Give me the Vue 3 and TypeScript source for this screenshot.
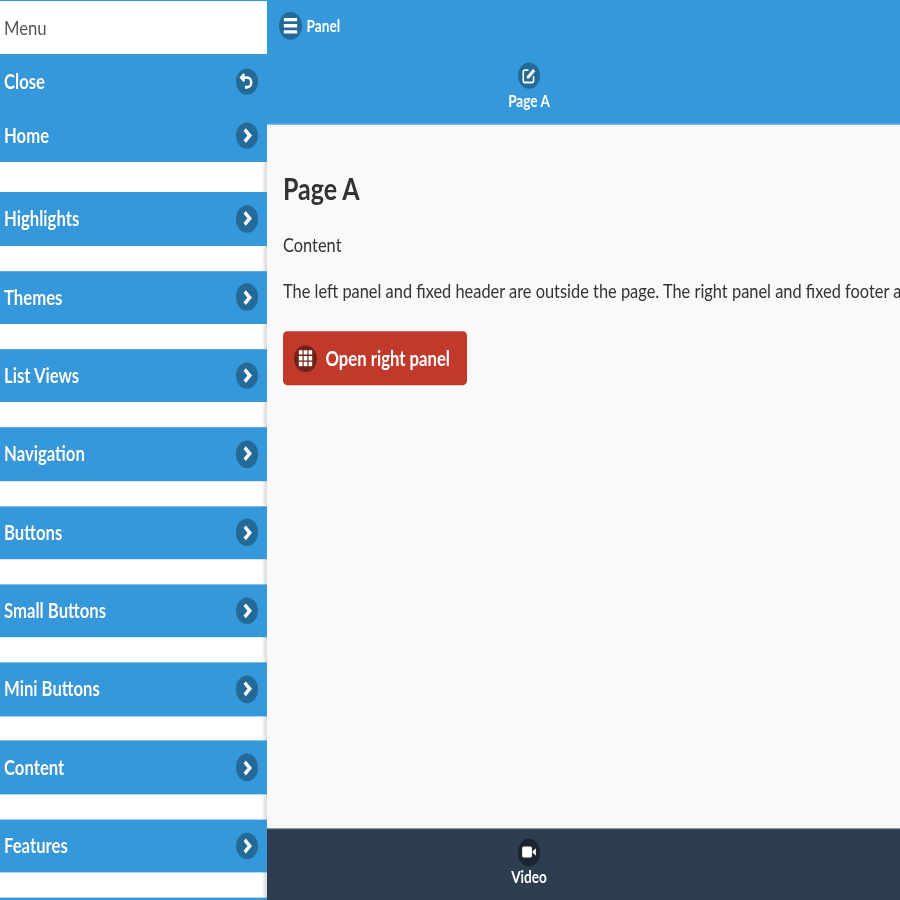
<script setup lang="ts">
const items: string[] = [
  'Highlights',
  'Themes',
  'List Views',
  'Navigation',
  'Buttons',
  'Small Buttons',
  'Mini Buttons',
  'Content',
  'Features',
]
</script>

<template>
  <div class="viewport">
    <div class="app">
      <aside class="side">
        <div class="menu-title">Menu</div>
        <div class="row close">
          <span>Close</span>
          <span class="ico">
            <svg viewBox="0 0 14 14" width="16" height="16"><path d="M4.6 1.4 2 4.1 4.8 6.6M2.6 4.1h4.6a3.5 3.5 0 0 1 0 7H5.2" fill="none" stroke="#fff" stroke-width="2.1" /></svg>
          </span>
        </div>
        <div class="row home">
          <span>Home</span>
          <span class="ico">
            <svg viewBox="0 0 14 14" width="16" height="16"><path d="M5 2.6 9.4 7 5 11.4" fill="none" stroke="#fff" stroke-width="2.8" /></svg>
          </span>
        </div>
        <div v-for="item in items" :key="item" class="row">
          <span>{{ item }}</span>
          <span class="ico">
            <svg viewBox="0 0 14 14" width="16" height="16"><path d="M5 2.6 9.4 7 5 11.4" fill="none" stroke="#fff" stroke-width="2.8" /></svg>
          </span>
        </div>
        <div class="row"></div>
      </aside>
      <main class="main">
        <header class="head">
          <div class="panel">
            <span class="ico">
              <svg viewBox="0 0 14 14" width="17" height="17"><path d="M1.5 2.8h11M1.5 7h11M1.5 11.2h11" fill="none" stroke="#fff" stroke-width="2.3" /></svg>
            </span>
            <span>Panel</span>
          </div>
          <div class="tab">
            <span class="ico">
              <svg viewBox="0 0 14 14" width="16" height="16"><path d="M6.5 3H3.2A1.2 1.2 0 0 0 2 4.2v6.6A1.2 1.2 0 0 0 3.2 12h6.6a1.2 1.2 0 0 0 1.2-1.2V7.5" fill="none" stroke="#fff" stroke-width="1.4" /><path d="M5.2 9.2V7.4L10.6 2l1.8 1.8L7 9.2z" fill="#fff" /></svg>
            </span>
            <span class="tab-label">Page A</span>
          </div>
        </header>
        <section class="page">
          <h2>Page A</h2>
          <p class="first">Content</p>
          <p class="long">The left panel and fixed header are outside the page. The right panel and fixed footer are inside the page.</p>
          <div class="btn">
            <span class="ico red">
              <svg viewBox="0 0 14 14" width="17" height="17"><path d="M1.5 1.5h3v3h-3zM5.5 1.5h3v3h-3zM9.5 1.5h3v3h-3zM1.5 5.5h3v3h-3zM5.5 5.5h3v3h-3zM9.5 5.5h3v3h-3zM1.5 9.5h3v3h-3zM5.5 9.5h3v3h-3zM9.5 9.5h3v3h-3z" fill="#fff" /></svg>
            </span>
            <span>Open right panel</span>
          </div>
        </section>
        <footer class="foot">
          <div class="tab">
            <span class="ico dark">
              <svg viewBox="0 0 14 14" width="16" height="16"><rect x="1" y="3" width="8.6" height="8" rx="1.2" fill="#fff" /><path d="M10.2 6.4 13 4.2v5.6l-2.8-2.2z" fill="#fff" /></svg>
            </span>
            <span class="tab-label">Video</span>
          </div>
        </footer>
      </main>
    </div>
  </div>
</template>

<style>
html, body { margin: 0; background: #f9f9f9; }
</style>

<style scoped>
.viewport {
  width: 900px;
  height: 900px;
  overflow: hidden;
}
.app {
  display: flex;
  width: 900px;
  height: 750px;
  transform: scaleY(1.2);
  transform-origin: top left;
  font-family: Lato, "Liberation Sans", sans-serif;
  filter: blur(0.5px);
  overflow: hidden;
}
.side {
  width: 267px;
  flex: none;
  background: #fff;
  box-shadow: inset -4px 0 3px -1px rgba(0, 0, 0, 0.14);
  border-top: 1.7px solid #3498db;
  box-sizing: border-box;
  overflow: hidden;
}
.menu-title {
  height: 44px;
  display: flex;
  align-items: center;
  padding-left: 4px;
  font-size: 16.7px;
  color: #555;
  background: #fff;
}
.row {
  height: 44.4px;
  margin-bottom: 20.95px;
  padding: 0 9px 0 4px;
  display: flex;
  align-items: center;
  justify-content: space-between;
  background: #3498db;
  color: #fff;
  font-size: 16.7px;
  font-weight: 700;
  text-shadow: 0 0 1px rgba(0, 0, 0, 0.2);
}
.row.close {
  height: 45.8px;
  margin-bottom: 0;
  box-shadow: 0 1px 0 #3498db;
}
.row.home {
  margin-bottom: 25px;
}
.ico {
  width: 22.5px;
  height: 22.5px;
  flex: none;
  border-radius: 50%;
  background: rgba(0, 0, 0, 0.3);
  display: flex;
  align-items: center;
  justify-content: center;
}
.main {
  flex: 1;
  min-width: 0;
  display: flex;
  flex-direction: column;
  background: #f9f9f9;
}
.head {
  height: 103.5px;
  flex: none;
  background: #3498db;
  color: #fff;
  display: flex;
  flex-direction: column;
  border-bottom: 1px solid #7fbde9;
  box-sizing: border-box;
}
.panel {
  height: 43px;
  display: flex;
  align-items: center;
  gap: 5px;
  padding-left: 12px;
  font-size: 13.7px;
  font-weight: 700;
}
.tab {
  width: 524px;
  display: flex;
  flex-direction: column;
  align-items: center;
}
.head .tab {
  padding-top: 8.5px;
  gap: 1.7px;
}
.foot .tab {
  gap: 1px;
}
.tab-label {
  font-size: 13.6px;
  font-weight: 700;
}
.page {
  flex: 1;
  padding: 38.7px 16px 0;
  min-width: 0;
  color: #333;
}
h2 {
  margin: 0;
  font-size: 25px;
  font-weight: 700;
  line-height: 30px;
}
p {
  margin: 0;
  font-size: 16.4px;
  line-height: 22px;
  white-space: nowrap;
}
.first { margin-top: 21.2px; }
.long { margin-top: 15.3px; }
.btn {
  margin-top: 23.6px;
  width: 184px;
  height: 45px;
  box-sizing: border-box;
  padding-left: 11px;
  display: flex;
  align-items: center;
  gap: 9px;
  background: #c0392b;
  color: #fff;
  border-radius: 4px;
  font-size: 16.7px;
  font-weight: 700;
}
.ico.red { background: rgba(0, 0, 0, 0.4); }
.foot {
  height: 60px;
  flex: none;
  background: #2c3e50;
  color: #fff;
  box-sizing: border-box;
  padding-top: 8px;
  border-top: 1px solid #8b96a2;
}
.ico.dark { background: rgba(0, 0, 0, 0.4); }
</style>
